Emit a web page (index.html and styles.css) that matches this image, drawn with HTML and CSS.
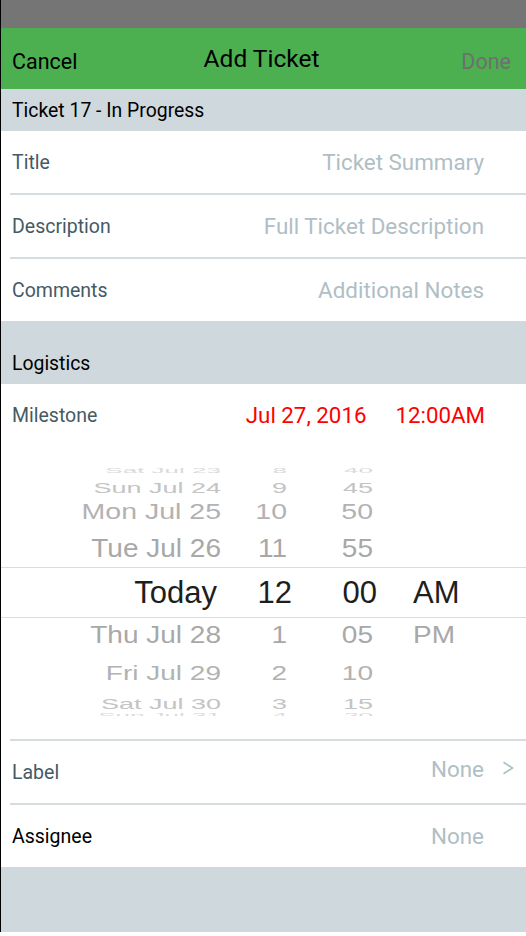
FILE: index.html
```html
<!DOCTYPE html>
<html lang="en">
<head>
<meta charset="utf-8">
<title>Add Ticket</title>
<link rel="stylesheet" href="styles.css">
</head>
<body>
<div class="screen">
  <div class="statusbar"></div>
  <header class="navbar">
    <span class="nav-btn cancel">Cancel</span>
    <h1 class="nav-title">Add Ticket</h1>
    <span class="nav-btn done">Done</span>
  </header>

  <div class="section-head">Ticket 17 - In Progress</div>
  <div class="group">
    <div class="row first"><span class="label">Title</span><span class="value placeholder">Ticket Summary</span></div>
    <div class="row"><span class="label">Description</span><span class="value placeholder">Full Ticket Description</span></div>
    <div class="row"><span class="label">Comments</span><span class="value placeholder">Additional Notes</span></div>
  </div>

  <div class="section-head tall">Logistics</div>
  <div class="group">
    <div class="row first milestone">
      <span class="label">Milestone</span>
      <span class="dates"><span class="date-val">Jul 27, 2016</span><span class="time-val">12:00AM</span></span>
    </div>
    <div class="picker">
      <div class="wheel">
        <div class="wheel-rows">
          <div class="p-row r-s4"><span class="c-date">Sat Jul 23</span><span class="c-h">8</span><span class="c-m">40</span><span class="c-ap"></span></div>
          <div class="p-row r-s3"><span class="c-date">Sun Jul 24</span><span class="c-h">9</span><span class="c-m">45</span><span class="c-ap"></span></div>
          <div class="p-row r-s2"><span class="c-date">Mon Jul 25</span><span class="c-h">10</span><span class="c-m">50</span><span class="c-ap"></span></div>
          <div class="p-row r-s1"><span class="c-date">Tue Jul 26</span><span class="c-h">11</span><span class="c-m">55</span><span class="c-ap"></span></div>
          <div class="p-row r-sel"><span class="c-date">Today</span><span class="c-h">12</span><span class="c-m">00</span><span class="c-ap">AM</span></div>
          <div class="p-row r-n1"><span class="c-date">Thu Jul 28</span><span class="c-h">1</span><span class="c-m">05</span><span class="c-ap">PM</span></div>
          <div class="p-row r-n2"><span class="c-date">Fri Jul 29</span><span class="c-h">2</span><span class="c-m">10</span><span class="c-ap"></span></div>
          <div class="p-row r-n3"><span class="c-date">Sat Jul 30</span><span class="c-h">3</span><span class="c-m">15</span><span class="c-ap"></span></div>
          <div class="p-row r-n4"><span class="c-date">Sun Jul 31</span><span class="c-h">4</span><span class="c-m">20</span><span class="c-ap"></span></div>
        </div>
      </div>
    </div>
    <div class="row nav-row">
      <span class="label">Label</span>
      <span class="value placeholder">None</span>
      <svg class="chevron" width="12" height="14" viewBox="0 0 12 14" aria-hidden="true"><polyline points="1.5,1.2 10.5,7 1.5,12.8" fill="none" stroke="#b0bec5" stroke-width="1.7"/></svg>
    </div>
    <div class="row"><span class="label dark">Assignee</span><span class="value placeholder">None</span></div>
  </div>
  <div class="footer-space"></div>
</div>
</body>
</html>
```

FILE: styles.css
```css
* { box-sizing: border-box; }

html, body {
  margin: 0;
  padding: 0;
  background: #ffffff;
}

body {
  font-family: Roboto, "Noto Sans", "Liberation Sans", sans-serif;
  width: 526px;
  height: 936px;
  overflow: hidden;
}

.screen {
  width: 526px;
  height: 932px;
  border-left: 1px solid #000;
  background: #cfd8dc;
  display: flex;
  flex-direction: column;
}

.statusbar {
  height: 28px;
  background: #757575;
  flex: none;
}

.navbar {
  height: 61px;
  flex: none;
  background: #4caf50;
  display: grid;
  grid-template-columns: 1fr auto 1fr;
  align-items: center;
  padding: 0 15px 0 11px;
}

.nav-btn {
  font-size: 21.5px;
  padding-top: 6px;
  color: #000;
}

.nav-btn.done {
  justify-self: end;
  color: #6f6f6f;
}

.nav-title {
  margin: 0;
  font-size: 24.5px;
  font-weight: 400;
  color: #000;
  padding-bottom: 1px;
}

.section-head {
  height: 42px;
  flex: none;
  display: flex;
  align-items: center;
  padding-left: 11px;
  font-size: 19.4px;
  color: #000;
}

.section-head.tall {
  height: 63px;
  align-items: flex-end;
  padding-bottom: 9px;
}

.group {
  background: #fff;
  flex: none;
}

.row {
  height: 64px;
  margin-left: 9px;
  padding: 0 42px 0 2px;
  border-top: 2px solid #d5dde1;
  display: flex;
  align-items: center;
  justify-content: space-between;
}

.row.first {
  border-top: none;
  height: 62px;
}

.label {
  font-size: 19.5px;
  color: #455a64;
}

.label.dark { color: #000; }

.value {
  font-size: 22.4px;
}

.placeholder {
  color: #b0bec5;
}

.milestone {
  padding-right: 41px;
}

.dates {
  display: flex;
  gap: 29px;
  font-size: 22.3px;
  color: #ff0000;
}

.nav-row {
  padding-right: 12px;
}

.nav-row .value {
  margin-left: auto;
  margin-top: -6px;
}

.chevron {
  display: block;
  margin-left: 18px;
  margin-top: -8px;
  flex: none;
}

/* Date picker */
.picker {
  padding: 19px 0 23px;
  background: #fff;
}

.wheel {
  height: 251px;
  overflow: hidden;
}

.wheel-rows {
  margin-top: -4px;
  display: flex;
  flex-direction: column;
}

.p-row {
  display: grid;
  grid-template-columns: 220px 71px 85px 1fr;
  align-items: center;
  font-family: "Liberation Sans", Arial, sans-serif;
  font-size: 28px;
  line-height: 28px;
  color: #a8a8a8;
  white-space: nowrap;
  flex: none;
}

.c-date { text-align: right; }
.c-h { text-align: right; padding-right: 5px; }
.c-m { text-align: right; padding-right: 4px; }
.c-ap { padding-left: 36px; }

.r-s4 { height: 16px; transform: scaleY(0.28); color: #dadada; font-size: 26px; }
.r-s3 { height: 15px; transform: scaleY(0.53); color: #c4c4c4; font-size: 27px; }
.r-s2 { height: 38px; transform: scaleY(0.8); color: #b2b2b2; font-size: 28.5px; }
.r-s1 { height: 37px; transform: scaleY(0.9); color: #a8a8a8; }

.r-sel {
  height: 51px;
  border-top: 1px solid #dcdcdc;
  border-bottom: 1px solid #dcdcdc;
  font-size: 31px;
  line-height: 31px;
  color: #1e1e1e;
}

.r-sel .c-h { padding-right: 0; }
.r-sel .c-m { padding-right: 0; }
.r-sel .c-date { padding-right: 4px; }

.r-n1 { height: 34px; transform: scaleY(0.88); color: #a8a8a8; }
.r-n2 { height: 42px; transform: scaleY(0.73); color: #b2b2b2; }
.r-n3 { height: 13px; transform: scaleY(0.53); color: #c4c4c4; font-size: 27px; }
.r-n4 { height: 12px; transform: scaleY(0.28); color: #dadada; font-size: 26px; }

.footer-space {
  flex: 1;
  background: #cfd8dc;
}
```
